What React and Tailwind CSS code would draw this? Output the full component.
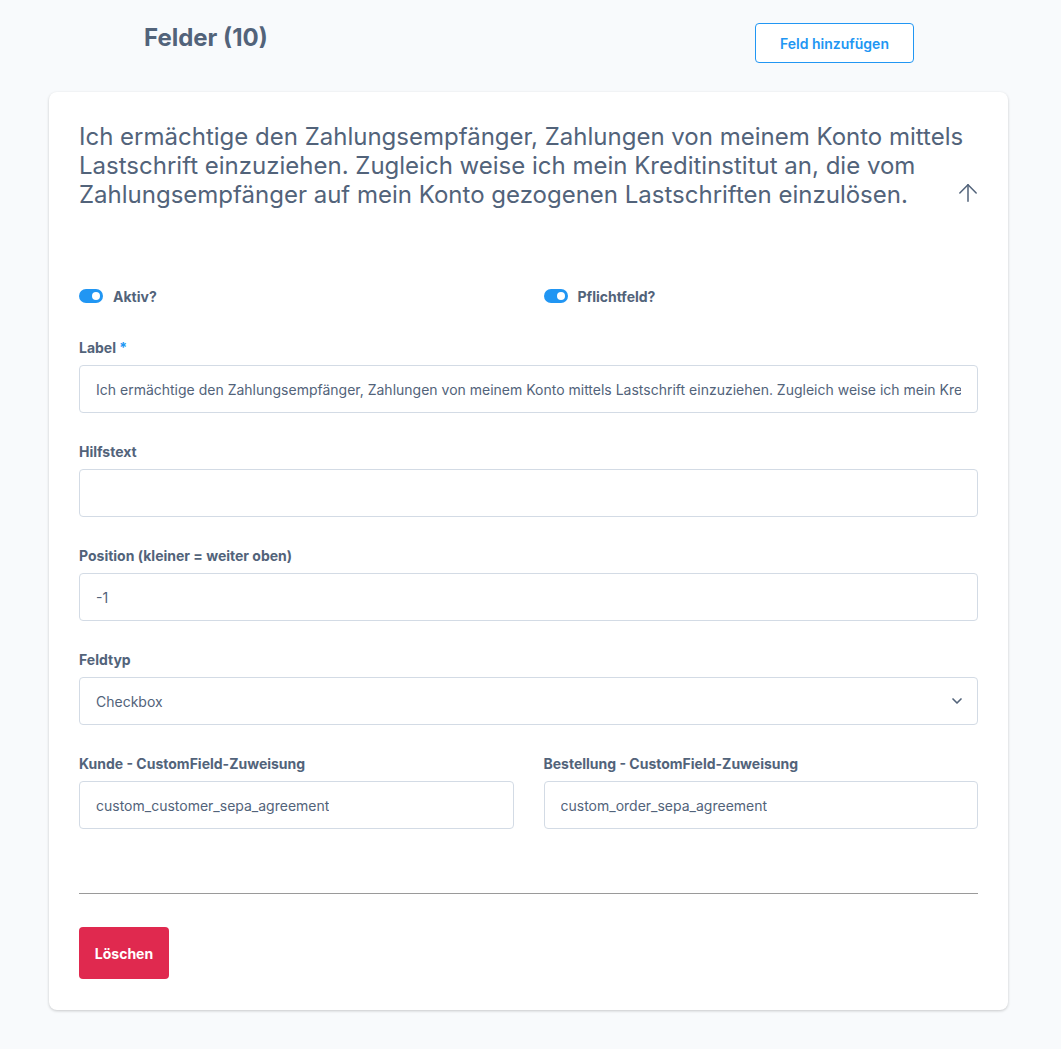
import { ChevronDown, ArrowUp } from 'lucide-react';

const font = { fontFamily: 'Inter, "Noto Sans", sans-serif' };

function Toggle({ label }) {
  return (
    <label className="flex items-center gap-[10px] h-5">
      <span className="relative w-[24px] h-[14px] rounded-full bg-[#2196f3]">
        <span className="absolute right-[3px] top-[3px] w-[8px] h-[8px] rounded-full bg-white" />
      </span>
      <span className="text-[14px] font-bold text-[#52637a]">{label}</span>
    </label>
  );
}

function Field({ label, required, value, select, last }) {
  return (
    <div className={last ? '' : 'mb-[29px]'}>
      <div className="text-[14px] font-bold text-[#52637a] leading-5 mb-[7px]">
        {label}
        {required && <span className="text-[#2196f3]"> *</span>}
      </div>
      <div className="h-[48px] border border-[#d3dbe5] rounded-[4px] px-4 flex items-center justify-between bg-white overflow-hidden">
        <span className="text-[14px] text-[#52637a] whitespace-nowrap overflow-hidden">{value}</span>
        {select && <ChevronDown size={16} strokeWidth={2.5} className="text-[#52637a] shrink-0 -mr-[4px]" />}
      </div>
    </div>
  );
}

export default function App() {
  return (
    <div style={font} className="min-h-[1049px] bg-[#f8fafc] pl-[49px] pr-[53px] pt-[23px] pb-10">
      <header className="flex items-start justify-between h-[69px]">
        <h1 className="ml-[95px] mt-[1px] text-[24px] font-bold text-[#52637a] leading-[28px]">Felder (10)</h1>
        <button className="mr-[94px] w-[159px] h-[40px] border border-[#2196f3] rounded-[4px] text-[14px] font-semibold text-[#2196f3] bg-white">
          Feld hinzufügen
        </button>
      </header>

      <div className="bg-white rounded-[8px] shadow-[0_1px_3px_rgba(0,0,0,0.2)] px-[30px] pt-[30px] pb-[31px]">
        <div className="flex items-end mb-[77px]">
          <p className="flex-1 min-w-0 text-[24px] leading-[29px] text-[#52637a]">
            Ich ermächtige den Zahlungsempfänger, Zahlungen von meinem Konto mittels Lastschrift einzuziehen. Zugleich weise ich mein Kreditinstitut an, die vom Zahlungsempfänger auf mein Konto gezogenen Lastschriften einzulösen.
          </p>
          <ArrowUp size={28} strokeWidth={1.3} className="shrink-0 text-[#52637a] -ml-[17px] mb-[2px] -mr-[4px]" />
        </div>

        <div className="grid grid-cols-2 gap-[30px] mb-[32px]">
          <Toggle label="Aktiv?" />
          <Toggle label="Pflichtfeld?" />
        </div>

        <Field label="Label" required value="Ich ermächtige den Zahlungsempfänger, Zahlungen von meinem Konto mittels Lastschrift einzuziehen. Zugleich weise ich mein Kreditinstitut an, die vom Zahlungsempfänger auf mein Konto gezogenen Lastschriften einzulösen." />
        <Field label="Hilfstext" value="" />
        <Field label="Position (kleiner = weiter oben)" value="-1" />
        <Field label="Feldtyp" value="Checkbox" select />

        <div className="grid grid-cols-2 gap-[30px]">
          <Field label="Kunde - CustomField-Zuweisung" value="custom_customer_sepa_agreement" last />
          <Field label="Bestellung - CustomField-Zuweisung" value="custom_order_sepa_agreement" last />
        </div>

        <hr className="mt-[64px] border-0 border-t border-[#9a9a9a] mb-[33px]" />

        <button className="w-[90px] h-[52px] rounded-[4px] bg-[#e0294f] text-white text-[14px] font-bold">
          Löschen
        </button>
      </div>
    </div>
  );
}
